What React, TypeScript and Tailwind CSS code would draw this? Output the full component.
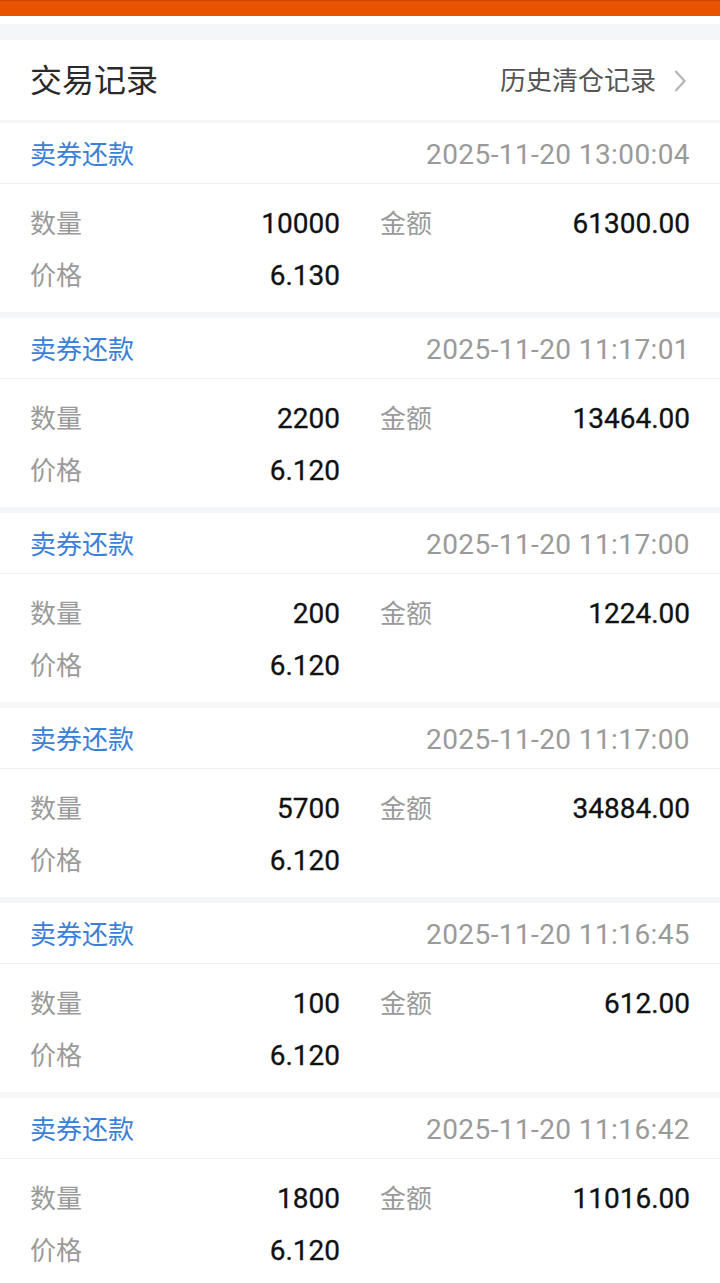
import React from "react";

const records = [
  { time: "2025-11-20 13:00:04", qty: "10000", amount: "61300.00", price: "6.130" },
  { time: "2025-11-20 11:17:01", qty: "2200", amount: "13464.00", price: "6.120" },
  { time: "2025-11-20 11:17:00", qty: "200", amount: "1224.00", price: "6.120" },
  { time: "2025-11-20 11:17:00", qty: "5700", amount: "34884.00", price: "6.120" },
  { time: "2025-11-20 11:16:45", qty: "100", amount: "612.00", price: "6.120" },
  { time: "2025-11-20 11:16:42", qty: "1800", amount: "11016.00", price: "6.120" },
];

const font = "font-['Roboto','Noto_Sans_CJK_SC',sans-serif]";

function Card({ r }: { r: (typeof records)[number] }) {
  return (
    <div className="bg-white">
      <div className="h-[61px] flex items-center justify-between pl-[30px] pr-[30px] pt-[3px] border-b border-[#f0f0f0]">
        <span className="text-[26px] text-[#3b80d8] leading-none">卖券还款</span>
        <span className="text-[28px] text-[#9a9a9a] leading-none tracking-[0.4px]">{r.time}</span>
      </div>
      <div className="px-[30px] pt-[14px] pb-[10px]">
        <div className="h-[52px] grid grid-cols-2 gap-x-[40px] items-center">
          <div className="flex items-center justify-between">
            <span className="text-[26px] text-[#9a9a9a] leading-none">数量</span>
            <span className="text-[28px] text-[#111] leading-none [-webkit-text-stroke:0.3px_#111]">{r.qty}</span>
          </div>
          <div className="flex items-center justify-between">
            <span className="text-[26px] text-[#9a9a9a] leading-none">金额</span>
            <span className="text-[28px] text-[#111] leading-none [-webkit-text-stroke:0.3px_#111]">{r.amount}</span>
          </div>
        </div>
        <div className="h-[52px] grid grid-cols-2 gap-x-[40px] items-center">
          <div className="flex items-center justify-between">
            <span className="text-[26px] text-[#9a9a9a] leading-none">价格</span>
            <span className="text-[28px] text-[#111] leading-none [-webkit-text-stroke:0.3px_#111]">{r.price}</span>
          </div>
          <div />
        </div>
      </div>
    </div>
  );
}

export default function App() {
  return (
    <div className={`${font} w-[720px] h-[1283px] overflow-hidden bg-[#f5f6f8]`}>
      <div className="h-[16px] bg-[#e85300] border-t border-[#c84400]" />
      <div className="h-[8px] bg-white" />
      <div className="h-[16px]" />
      <div className="h-[80px] bg-white flex items-center justify-between pl-[30px] pr-[34px] pt-[2px]">
        <span className="text-[32px] text-[#2a2a2a] leading-none">交易记录</span>
        <div className="flex items-center gap-[18px]">
          <span className="text-[26px] text-[#555] leading-none">历史清仓记录</span>
          <svg width="12" height="24" viewBox="0 0 12 24" fill="none">
            <path d="M1.5 2 L10.5 12 L1.5 22" stroke="#b5b5b5" strokeWidth="2.2" />
          </svg>
        </div>
      </div>
      <div className="flex flex-col gap-[6px] pt-[3px]">
        {records.map((r, i) => (
          <Card key={i} r={r} />
        ))}
      </div>
    </div>
  );
}
